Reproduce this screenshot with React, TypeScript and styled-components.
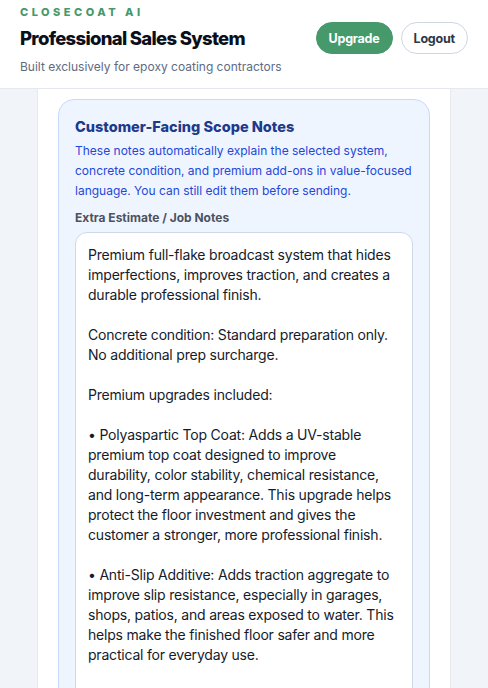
import React from "react";
import styled, { createGlobalStyle } from "styled-components";

const scopeNotes = `Premium full-flake broadcast system that hides imperfections, improves traction, and creates a durable professional finish.

Concrete condition: Standard preparation only. No additional prep surcharge.

Premium upgrades included:

• Polyaspartic Top Coat: Adds a UV-stable premium top coat designed to improve durability, color stability, chemical resistance, and long-term appearance. This upgrade helps protect the floor investment and gives the customer a stronger, more professional finish.

• Anti-Slip Additive: Adds traction aggregate to improve slip resistance, especially in garages, shops, patios, and areas exposed to water. This helps make the finished floor safer and more practical for everyday use.
`;

function App() {
  return (
    <>
      <GlobalStyle />
      <StyleHeader>
        <StyleBrand>
          <StyleKicker>Closecoat AI</StyleKicker>
          <StyleTitle>Professional Sales System</StyleTitle>
          <StyleSub>Built exclusively for epoxy coating contractors</StyleSub>
        </StyleBrand>
        <StyleActions>
          <StyleButton $primary>Upgrade</StyleButton>
          <StyleButton>Logout</StyleButton>
        </StyleActions>
      </StyleHeader>
      <StyleMain>
        <StyleCard>
          <StylePanel>
            <StylePanelTitle>Customer-Facing Scope Notes</StylePanelTitle>
            <StylePanelText>
              These notes automatically explain the selected system, concrete
              condition, and premium add-ons in value-focused language. You can
              still edit them before sending.
            </StylePanelText>
            <StyleLabel htmlFor="job-notes">Extra Estimate / Job Notes</StyleLabel>
            <StyleNotes id="job-notes" defaultValue={scopeNotes} />
          </StylePanel>
        </StyleCard>
      </StyleMain>
    </>
  );
}

const GlobalStyle = createGlobalStyle`
  html, body {
    margin: 0;
    padding: 0;
    background: #f1f4f9;
    font-family: Inter, "Noto Sans", sans-serif;
    overflow: hidden;
  }
  * {
    box-sizing: border-box;
  }
`;

const StyleHeader = styled.header`
  display: flex;
  justify-content: space-between;
  align-items: flex-start;
  height: 89px;
  padding: 0 20px;
  background: #ffffff;
  border-bottom: 1px solid #e5e8ee;
`;

const StyleBrand = styled.div`
  display: flex;
  flex-direction: column;
`;

const StyleKicker = styled.div`
  margin-top: 5px;
  font-size: 11px;
  line-height: 14px;
  font-weight: 800;
  letter-spacing: 3.5px;
  text-transform: uppercase;
  color: #47996b;
`;

const StyleTitle = styled.h1`
  margin: 5px 0 0;
  font-size: 18.5px;
  line-height: 28px;
  font-weight: 800;
  letter-spacing: -0.7px;
  color: #0b0f1a;
`;

const StyleSub = styled.p`
  margin: 7px 0 0;
  font-size: 12px;
  line-height: 16px;
  color: #5f6b80;
`;

const StyleActions = styled.div`
  display: flex;
  gap: 8px;
  margin-top: 22px;
`;

const StyleButton = styled.button<{ $primary?: boolean }>`
  height: 32px;
  padding: 0 12px;
  border-radius: 999px;
  font-family: Inter, "Noto Sans", sans-serif;
  font-size: 12.5px;
  font-weight: 700;
  letter-spacing: -0.2px;
  border: 1px solid ${(p) => (p.$primary ? "#46996b" : "#cfd6e2")};
  background: ${(p) => (p.$primary ? "#46996b" : "#ffffff")};
  color: ${(p) => (p.$primary ? "#ffffff" : "#2e3648")};
  cursor: pointer;
`;

const StyleMain = styled.main`
  display: flex;
  justify-content: center;
`;

const StyleCard = styled.section`
  width: 414px;
  padding: 10px 20px 20px;
  background: #ffffff;
  border-left: 1px solid #e6e9ef;
  border-right: 1px solid #e6e9ef;
`;

const StylePanel = styled.div`
  padding: 16px 16px 20px;
  background: #eff5ff;
  border: 1px solid #c8d9fb;
  border-radius: 16px;
`;

const StylePanelTitle = styled.h2`
  margin: 0;
  font-size: 14.5px;
  line-height: 22px;
  font-weight: 800;
  color: #1e3a8a;
`;

const StylePanelText = styled.p`
  margin: 3px 0 0;
  font-size: 12px;
  line-height: 20px;
  color: #2547d9;
`;

const StyleLabel = styled.label`
  display: block;
  margin-top: 9px;
  font-size: 12px;
  line-height: 16px;
  font-weight: 700;
  color: #4b5260;
`;

const StyleNotes = styled.textarea`
  display: block;
  width: 100%;
  height: 560px;
  margin-top: 6px;
  padding: 12px;
  background: #ffffff;
  border: 1px solid #cdd8ea;
  border-radius: 12px;
  font-family: Inter, "Noto Sans", sans-serif;
  font-size: 14px;
  line-height: 20px;
  letter-spacing: -0.2px;
  color: #141b2b;
  resize: none;
  overflow: hidden;
  outline: none;
`;

export default App;
